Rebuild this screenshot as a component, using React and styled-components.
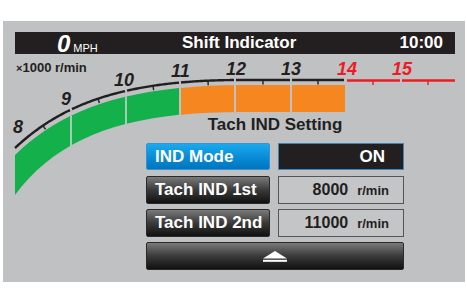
import React from "react";
import styled, { createGlobalStyle } from "styled-components";

const GlobalStyle = createGlobalStyle`
  body {
    margin: 0;
    background: #ffffff;
    font-family: "Liberation Sans", Arial, sans-serif;
  }
  * { box-sizing: border-box; }
`;

const Screen = styled.div`
  width: 467px;
  height: 300px;
  padding: 21px 2px 0 3px;
`;

const Panel = styled.div`
  width: 462px;
  height: 261px;
  background: #c0c1c3;
  padding: 11px 10px 0 12px;
  display: flex;
  flex-direction: column;
`;

const TitleBar = styled.div`
  height: 22px;
  background: #231f20;
  color: #ffffff;
  display: grid;
  grid-template-columns: 167px auto 1fr;
  align-items: center;
`;

const Speed = styled.div`
  padding-left: 42px;
  display: flex;
  align-items: baseline;
  height: 22px;
`;

const SpeedValue = styled.span`
  font-size: 24px;
  font-weight: bold;
  font-style: italic;
  line-height: 22px;
  margin-top: 1px;
`;

const SpeedUnit = styled.span`
  font-size: 11px;
  margin-left: 3px;
`;

const BarTitle = styled.span`
  font-size: 17px;
  font-weight: bold;
  line-height: 22px;
`;

const Clock = styled.span`
  font-size: 17px;
  font-weight: bold;
  line-height: 22px;
  justify-self: end;
  padding-right: 12px;
`;

const Body = styled.div`
  display: grid;
  grid-template-areas: "stack";
  flex: 1;
`;

const Gauge = styled.svg`
  grid-area: stack;
  width: 440px;
  height: 170px;
  display: block;
  overflow: visible;
`;

const Overlay = styled.div`
  grid-area: stack;
  display: flex;
  flex-direction: column;
  position: relative;
`;

const ScaleLabel = styled.div`
  margin-top: 6px;
  padding-left: 1px;
  font-size: 13px;
  line-height: 15px;
  font-weight: bold;
  color: #231f20;
`;

const Times = styled.span`
  font-size: 11px;
`;

const Settings = styled.div`
  margin: 39px 0 0 131px;
  width: 258px;
  display: flex;
  flex-direction: column;
  gap: 6px;
`;

const SettingsTitle = styled.div`
  font-size: 17px;
  font-weight: bold;
  line-height: 20px;
  color: #231f20;
  text-align: center;
  margin-bottom: 2px;
`;

const Row = styled.div`
  display: grid;
  grid-template-columns: 124px 126px;
  column-gap: 8px;
  height: 27px;
`;

const KeyButton = styled.div`
  border-radius: 2px;
  border: 1px solid ${(p) => (p.$active ? "#3b92d2" : "#2a2a2a")};
  background: ${(p) =>
    p.$active
      ? "linear-gradient(#18aaee, #0a8ad6 55%, #0075bd)"
      : "linear-gradient(#7a7a7a, #3a3a3a 50%, #111111)"};
  color: #ffffff;
  font-size: 17px;
  font-weight: bold;
  line-height: 25px;
  padding-left: 8px;
  white-space: nowrap;
`;

const ValueBox = styled.div`
  border: 1px solid ${(p) => (p.$dark ? "#3a86bd" : "#555555")};
  background: ${(p) => (p.$dark ? "#231f20" : "#c4c5c7")};
  color: ${(p) => (p.$dark ? "#ffffff" : "#231f20")};
  display: flex;
  align-items: baseline;
  justify-content: flex-end;
  padding-right: ${(p) => (p.$dark ? "18px" : "14px")};
  line-height: 25px;
`;

const ValueText = styled.span`
  font-size: ${(p) => (p.$big ? "17px" : "16px")};
  font-weight: bold;
`;

const Unit = styled.span`
  font-size: 13px;
  font-weight: bold;
  margin-left: 9px;
`;

const EjectButton = styled.div`
  height: 28px;
  border-radius: 2px;
  border: 1px solid #2a2a2a;
  background: linear-gradient(#7a7a7a, #3a3a3a 50%, #111111);
  display: flex;
  align-items: center;
  justify-content: center;
`;

// gauge geometry (page coordinates)
const P = [
  [15, 148],
  [60, 106],
  [120, 80],
  [240, 80],
];
const samples = [];
for (let i = 0; i <= 300; i++) {
  const t = i / 300;
  const u = 1 - t;
  const a = u * u * u, b = 3 * u * u * t, c = 3 * u * t * t, d = t * t * t;
  samples.push([
    a * P[0][0] + b * P[1][0] + c * P[2][0] + d * P[3][0],
    a * P[0][1] + b * P[1][1] + c * P[2][1] + d * P[3][1],
  ]);
}
const yAt = (x) => {
  if (x >= 240) return 80;
  for (let i = 1; i < samples.length; i++) {
    const [x0, y0] = samples[i - 1];
    const [x1, y1] = samples[i];
    if (x <= x1) return y0 + ((x - x0) / (x1 - x0 || 1)) * (y1 - y0);
  }
  return 80;
};
const linePts = (a, b) => {
  const pts = [];
  for (let x = a; x < b; x += 1.5) pts.push(`${x.toFixed(1)},${yAt(x).toFixed(2)}`);
  pts.push(`${b},${yAt(b).toFixed(2)}`);
  return pts.join(" ");
};
const tick = (x) => {
  const y = yAt(x);
  const s = (yAt(x + 1) - yAt(x - 1)) / 2;
  const n = Math.hypot(s, 1);
  return { x1: x, y1: y, x2: x + (-s / n) * 4.5, y2: y + (1 / n) * 4.5 };
};

const bounds = [15, 71, 126, 180, 235, 291, 345];
const blackSegs = bounds.slice(0, -1).map((a, i) => [a === 15 ? 15 : a + 1, bounds[i + 1] - 1]);
const blackTicks = [43, 98, 153, 208, 263, 318];
const bandPath =
  "M15,155 C60,112 120,86 240,85 L345,85 L345,112 L240,112 C130,112 60,135 15,195 Z";

const numbers = [
  { n: "8", x: 13, y: 133 },
  { n: "9", x: 61, y: 105 },
  { n: "10", x: 114, y: 86 },
  { n: "11", x: 171, y: 77 },
  { n: "12", x: 226, y: 75 },
  { n: "13", x: 281, y: 75 },
  { n: "14", x: 337, y: 75, red: true },
  { n: "15", x: 392, y: 75, red: true },
];

const TachGauge = () => (
  <Gauge viewBox="15 54 440 170">
    <defs>
      <clipPath id="greenClip">
        <rect x="0" y="0" width="179" height="300" />
      </clipPath>
      <clipPath id="orangeClip">
        <rect x="181" y="0" width="200" height="300" />
      </clipPath>
      <clipPath id="bandClip">
        <path d={bandPath} />
      </clipPath>
    </defs>
    <path d={bandPath} fill="#14b04c" clipPath="url(#greenClip)" />
    <path d={bandPath} fill="#f6861f" clipPath="url(#orangeClip)" />
    <g clipPath="url(#bandClip)">
      {[71, 126].map((x) => (
        <line key={x} x1={x} x2={x} y1="80" y2="200" stroke="#d4d6d4" strokeWidth="1.5" />
      ))}
      {[235, 291].map((x) => (
        <line key={x} x1={x} x2={x} y1="80" y2="120" stroke="#c0c1c3" strokeWidth="2" />
      ))}
    </g>
    {blackSegs.map(([a, b]) => (
      <polyline key={a} points={linePts(a, b)} fill="none" stroke="#231f20" strokeWidth="2.4" />
    ))}
    {blackTicks.map((x) => (
      <line key={x} {...tick(x)} stroke="#231f20" strokeWidth="1.4" />
    ))}
    <line x1="347" x2="400" y1="80.5" y2="80.5" stroke="#ed1c24" strokeWidth="2.4" />
    <line x1="402" x2="455" y1="80.5" y2="80.5" stroke="#ed1c24" strokeWidth="2.4" />
    {[373, 428].map((x) => (
      <line key={x} x1={x} x2={x} y1="80" y2="85" stroke="#ed1c24" strokeWidth="1.4" />
    ))}
    {numbers.map((d) => (
      <text
        key={d.n}
        x={d.x}
        y={d.y}
        fontFamily='"Liberation Sans", Arial, sans-serif'
        fontSize="18"
        fontWeight="bold"
        fontStyle="italic"
        fill={d.red ? "#ed1c24" : "#231f20"}
      >
        {d.n}
      </text>
    ))}
  </Gauge>
);

const EjectIcon = () => (
  <svg width="26" height="12" viewBox="0 0 26 12">
    <polygon points="13,1 25,8.5 1,8.5" fill="#ffffff" />
    <rect x="1" y="9.8" width="24" height="2" fill="#ffffff" />
  </svg>
);

export default function App() {
  return (
    <Screen>
      <GlobalStyle />
      <Panel>
        <TitleBar>
          <Speed>
            <SpeedValue>0</SpeedValue>
            <SpeedUnit>MPH</SpeedUnit>
          </Speed>
          <BarTitle>Shift Indicator</BarTitle>
          <Clock>10:00</Clock>
        </TitleBar>
        <Body>
          <TachGauge />
          <Overlay>
            <ScaleLabel>
              <Times>×</Times>1000 r/min
            </ScaleLabel>
            <Settings>
              <SettingsTitle>Tach IND Setting</SettingsTitle>
              <Row>
                <KeyButton $active>IND Mode</KeyButton>
                <ValueBox $dark>
                  <ValueText $big>ON</ValueText>
                </ValueBox>
              </Row>
              <Row>
                <KeyButton>Tach IND 1st</KeyButton>
                <ValueBox>
                  <ValueText>8000</ValueText>
                  <Unit>r/min</Unit>
                </ValueBox>
              </Row>
              <Row>
                <KeyButton>Tach IND 2nd</KeyButton>
                <ValueBox>
                  <ValueText>11000</ValueText>
                  <Unit>r/min</Unit>
                </ValueBox>
              </Row>
              <EjectButton>
                <EjectIcon />
              </EjectButton>
            </Settings>
          </Overlay>
        </Body>
      </Panel>
    </Screen>
  );
}
